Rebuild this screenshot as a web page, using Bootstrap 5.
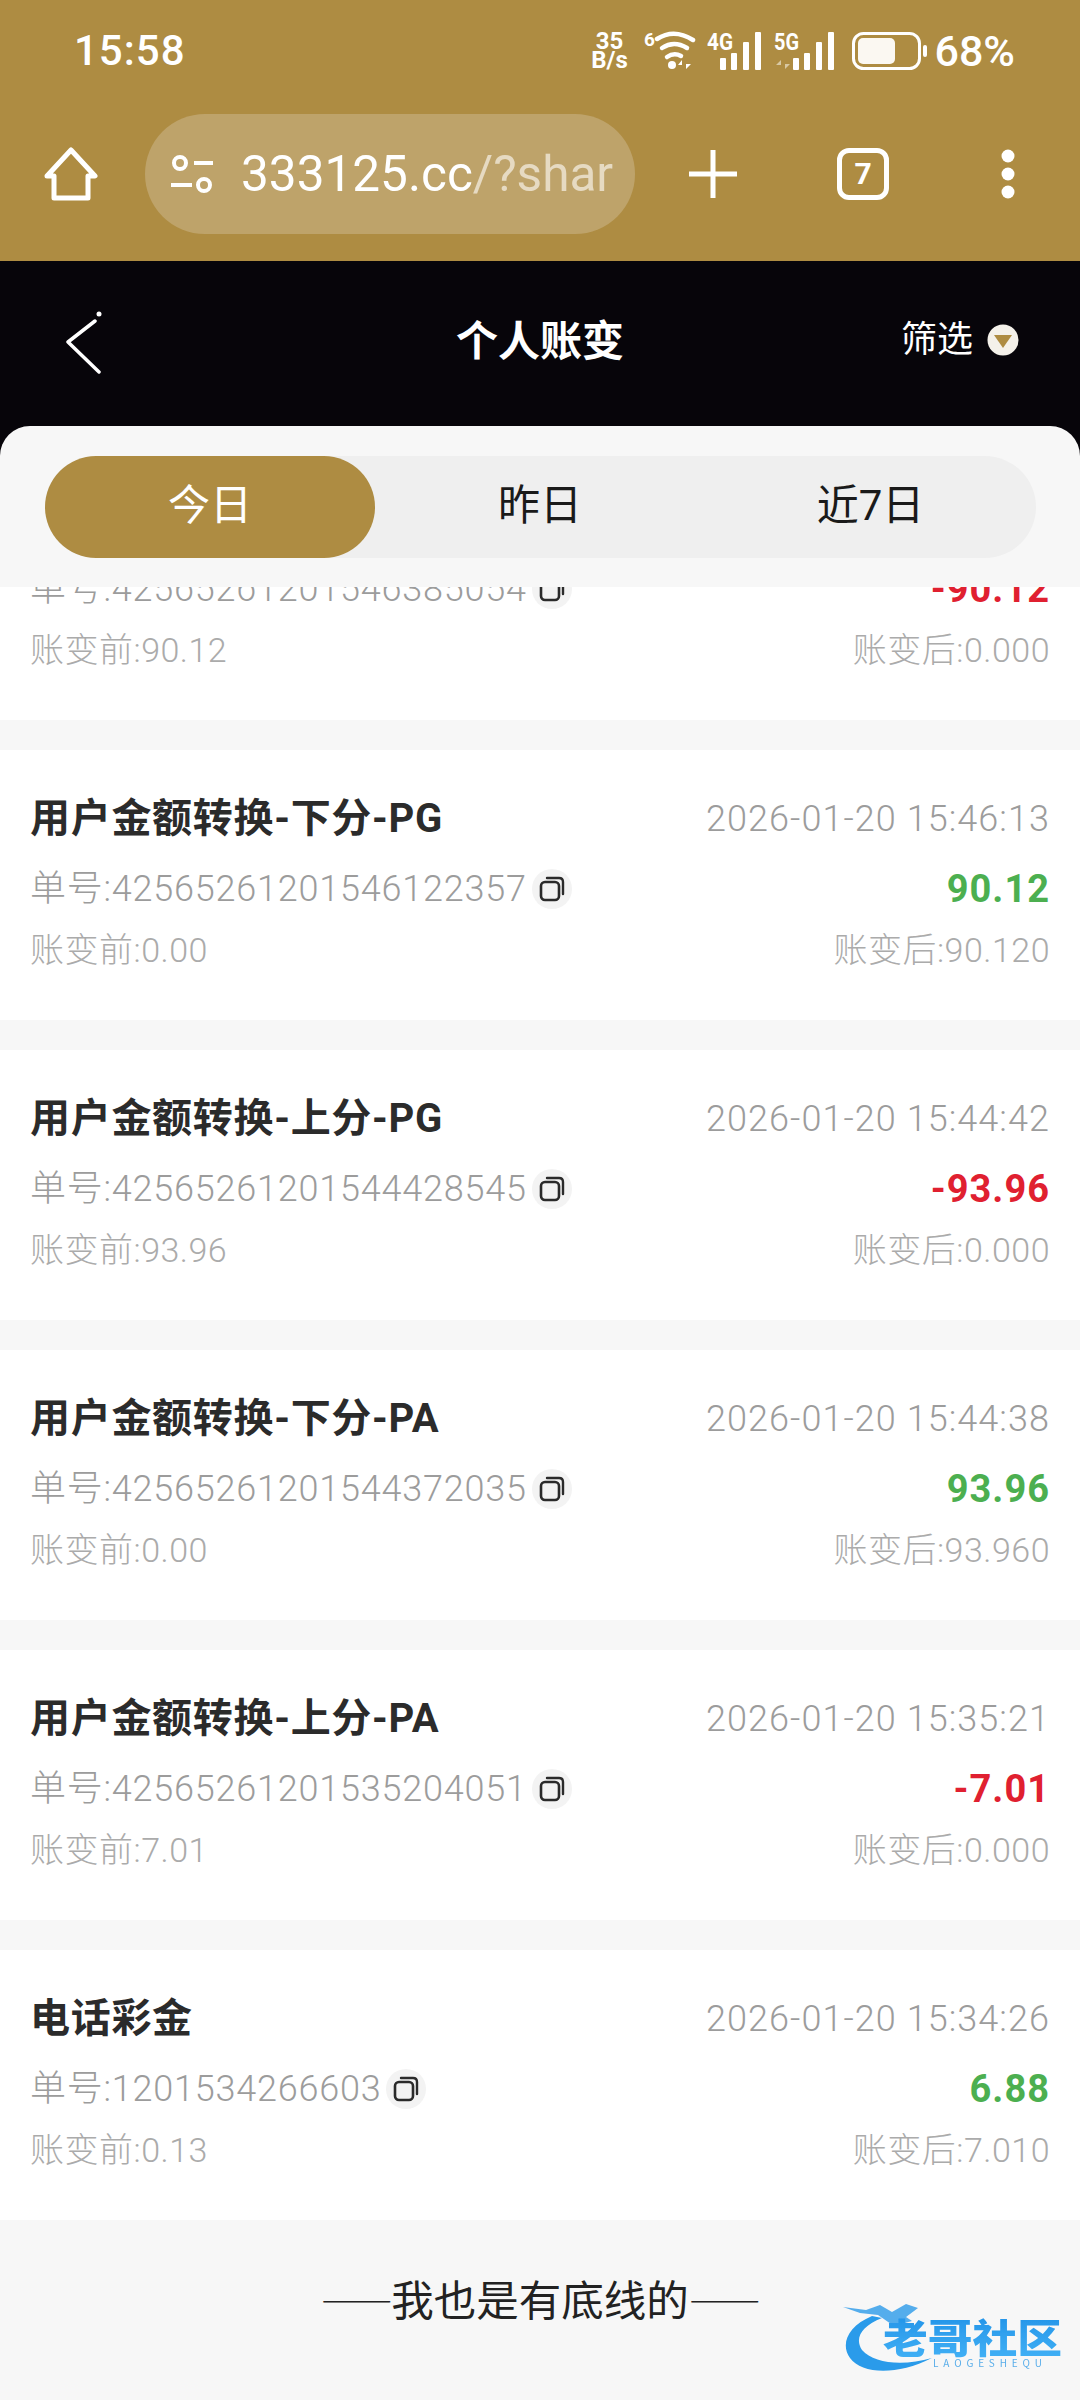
<!DOCTYPE html>
<html lang="zh-CN">
<head>
<meta charset="UTF-8" />
<meta name="viewport" content="width=device-width, initial-scale=1" />
<title>个人账变</title>
<link href="https://cdn.jsdelivr.net/npm/bootstrap@5.3.0/dist/css/bootstrap.min.css" rel="stylesheet">
<style>
  body { margin: 0; width: 1080px; height: 2400px; overflow: hidden; background: #f7f7f7; font-family: Roboto, "Noto Sans CJK SC", sans-serif; }
  .gold-top { height: 261px; background: #ae8c42; color: #fff; }
  .stat-row { height: 82px; padding: 20px 65px 0 74px; }
  .stat-time { font-size: 42px; font-weight: 500; line-height: 42px; letter-spacing: 1px; }
  .stat-speed { width: 42px; font-size: 24px; font-weight: 700; line-height: 19px; text-align: center; margin-right: 14px; }
  .stat-icon { margin-left: 11px; }
  .stat-batt { margin-left: 16px; }
  .stat-pct { font-size: 43px; font-weight: 500; line-height: 42px; margin-left: 6px; }
  .tool-row { height: 120px; margin-top: 32px; padding: 0 44px; }
  .url-pill { width: 490px; height: 120px; margin-left: 47px; border-radius: 60px; background: #bea36a; padding-left: 25px; overflow: hidden; white-space: nowrap; }
  .url-text { font-size: 49.5px; margin-left: 27px; }
  .url-text span { color: #e6dac2; }
  .tool-plus { margin-left: 54px; }
  .tab-count { width: 52px; height: 52px; margin-left: 100px; border: 5px solid #fff; border-radius: 12px; font-size: 30px; font-weight: 700; line-height: 1; }
  .tool-dots { margin-left: 111px; }
  .black-wrap { background: #07050a; }
  .black-head { height: 165px; color: #fff; padding: 0 61px 0 66px; position: relative; }
  .black-back { margin-top: 50px; }
  .black-title { position: absolute; left: 0; right: 0; top: 58px; text-align: center; font-size: 42px; font-weight: 700; line-height: 46px; }
  .filter-box { margin-top: 59px; }
  .filter-text { font-size: 36px; line-height: 40px; margin-right: 14px; }
  .sheet-head { height: 161px; background: #f7f7f7; border-radius: 30px 30px 0 0; padding: 30px 44px 0 45px; }
  .tab-track { height: 102px; border-radius: 51px; background: #efefef; }
  .tab-item { width: 330px; height: 102px; padding-bottom: 4px; border-radius: 51px; font-size: 42px; color: #1a1a1a; }
  .tab-on { background: #ae8c42; color: #fff; }
  .tab-last { width: 331px; }
  .bill-list { height: 1633px; overflow: hidden; }
  .bill-item { height: 270px; background: #fff; margin-bottom: 30px; padding: 51px 30px 0; }
  .bill-clip { margin-top: -137px; }
  .bill-line1 { height: 36px; }
  .bill-line2 { height: 36px; margin-top: 34px; }
  .bill-line3 { height: 36px; margin-top: 25px; }
  .bill-name { font-size: 40px; font-weight: 700; color: #2b2b2b; line-height: 36px; letter-spacing: .7px; }
  .bill-time { font-size: 36px; font-weight: 300; color: #9c9c9c; line-height: 36px; letter-spacing: 1.05px; }
  .bill-no { font-size: 36px; font-weight: 300; color: #9c9c9c; line-height: 36px; letter-spacing: .77px; }
  .bill-amt { font-size: 38px; font-weight: 700; line-height: 36px; letter-spacing: 1px; }
  .amt-up { color: #4caf50; }
  .amt-down { color: #e02030; }
  .bill-sub { font-size: 34px; font-weight: 300; color: #ababab; line-height: 36px; letter-spacing: .5px; }
  .copy-btn { width: 40px; height: 40px; margin-left: 5px; border-radius: 50%; background: #f3f3f3; }
  .foot-wrap { height: 180px; position: relative; padding-top: 57px; text-align: center; font-size: 42.5px; line-height: 46px; color: #222; }
  .foot-dash { font-family: "Noto Sans CJK SC", sans-serif; font-size: 36px; letter-spacing: -1.5px; }
  .foot-logo { position: absolute; left: 840px; top: 70px; }
  .foot-logo text { font-family: "Noto Sans CJK SC", sans-serif; }
</style>
</head>
<body>

  <div class="gold-top">
    <div class="stat-row d-flex align-items-center justify-content-between">
      <div class="stat-time">15:58</div>
      <div class="d-flex align-items-center">
        <div class="stat-speed">35<br>B/s</div>
        <svg width="52" height="40" viewBox="0 0 52 40">
          <text x="0" y="15" font-size="19" font-weight="700" fill="#fff">6</text>
          <g fill="none" stroke="#fff" stroke-width="4.5" stroke-linecap="round">
            <path d="M13 8Q30 -3 49 9"/>
            <path d="M18 17Q30 9 43 17"/>
            <path d="M23 26Q30 21 37 25"/>
          </g>
          <circle cx="28" cy="34" r="4" fill="#fff"/>
          <path d="M38 38V29l-4 5h4zM42 29v9l5-5h-5z" fill="#fff"/>
        </svg>
        <svg class="stat-icon" width="56" height="40" viewBox="0 0 56 40">
          <text x="0" y="19" font-size="23" font-weight="700" fill="#fff" textLength="26" lengthAdjust="spacingAndGlyphs">4G</text>
          <g fill="#fff"><rect x="13" y="27" width="6" height="12" rx="1"/><rect x="24" y="22" width="6" height="17" rx="1"/><rect x="36" y="11" width="6" height="28" rx="1"/><rect x="48" y="1" width="6" height="38" rx="1"/></g>
        </svg>
        <svg class="stat-icon" width="62" height="40" viewBox="0 0 62 40">
          <text x="0" y="19" font-size="23" font-weight="700" fill="#fff" textLength="25" lengthAdjust="spacingAndGlyphs">5G</text>
          <path d="M7 38V29l-5 5h5zM11 29v9l5-5h-5z" fill="#d8c8a2"/>
          <g fill="#fff"><rect x="19" y="27" width="6" height="12" rx="1"/><rect x="30" y="22" width="6" height="17" rx="1"/><rect x="42" y="11" width="6" height="28" rx="1"/><rect x="54" y="1" width="6" height="38" rx="1"/></g>
        </svg>
        <svg class="stat-batt" width="76" height="38" viewBox="0 0 76 38">
          <rect x="1.5" y="1.5" width="66" height="35" rx="10" fill="none" stroke="#fff" stroke-width="3"/>
          <rect x="6" y="6" width="37" height="26" rx="5" fill="#fbf8f2"/>
          <rect x="71" y="13" width="4" height="12" rx="2" fill="#fff"/>
        </svg>
        <div class="stat-pct">68%</div>
      </div>
    </div>
    <div class="tool-row d-flex align-items-center">
      <svg width="54" height="56" viewBox="0 0 54 56" class="flex-shrink-0">
        <path d="M27 4L51 30H44V52H10V30H3Z" fill="none" stroke="#fff" stroke-width="5" stroke-linejoin="round"/>
      </svg>
      <div class="url-pill d-flex align-items-center flex-shrink-0">
        <svg width="44" height="40" viewBox="0 0 44 40" class="flex-shrink-0">
          <g fill="none" stroke="#fff" stroke-width="4">
            <circle cx="10" cy="9" r="6"/><circle cx="34" cy="31" r="6"/>
            <path d="M24 9H43M1 31H22"/>
          </g>
        </svg>
        <div class="url-text">333125.cc<span>/?shar</span></div>
      </div>
      <svg class="tool-plus flex-shrink-0" width="48" height="48" viewBox="0 0 48 48">
        <path d="M24 0V48M0 24H48" stroke="#fff" stroke-width="5" stroke-linecap="round"/>
      </svg>
      <div class="tab-count d-flex align-items-center justify-content-center flex-shrink-0">7</div>
      <svg class="tool-dots flex-shrink-0" width="16" height="50" viewBox="0 0 16 50">
        <circle cx="8" cy="7" r="6.5" fill="#fff"/><circle cx="8" cy="25" r="6.5" fill="#fff"/><circle cx="8" cy="43" r="6.5" fill="#fff"/>
      </svg>
    </div>
  </div>

  <div class="black-wrap">
    <div class="black-head d-flex align-items-start justify-content-between">
      <svg class="black-back" width="38" height="64" viewBox="0 0 38 64">
        <circle cx="33" cy="3" r="2.5" fill="#fff"/>
        <path d="M29 10L2 31L33 61" fill="none" stroke="#fff" stroke-width="3.5" stroke-linecap="round" stroke-linejoin="round"/>
      </svg>
      <div class="black-title">个人账变</div>
      <div class="filter-box d-flex align-items-center">
        <span class="filter-text">筛选</span>
        <svg width="32" height="32" viewBox="0 0 32 32">
          <circle cx="16" cy="16" r="15.5" fill="#f4f1ea"/>
          <path d="M7 11H25L16 24Z" fill="#ae8c42"/>
        </svg>
      </div>
    </div>

    <div class="sheet-head">
      <div class="tab-track d-flex">
        <div class="tab-item tab-on d-flex align-items-center justify-content-center">今日</div>
        <div class="tab-item d-flex align-items-center justify-content-center">昨日</div>
        <div class="tab-item tab-last d-flex align-items-center justify-content-center">近7日</div>
      </div>
    </div>
  </div>

  <div class="bill-list" id="billList"></div>

  <div class="foot-wrap">
    <span class="foot-dash">——</span>我也是有底线的<span class="foot-dash">——</span>
    <svg class="foot-logo" width="240" height="110" viewBox="0 0 240 110">
      <defs>
        <linearGradient id="logoBlue" x1="0" y1="0" x2="0" y2="1">
          <stop offset="0" stop-color="#1e8fe6"/><stop offset="1" stop-color="#45b4f7"/>
        </linearGradient>
        <filter id="logoSoft"><feGaussianBlur stdDeviation="0.7"/></filter>
      </defs>
      <g filter="url(#logoSoft)">
        <path d="M32 26C8 36 0 54 10 68C22 84 56 86 92 68C64 76 34 74 22 60C14 48 22 36 42 28Z" fill="#2a9bea"/>
        <path d="M3 17L26 20L40 15L52 22L66 14L78 18L66 27L72 31L54 36L38 25L20 23Z" fill="#2d9aea" opacity=".8"/>
        <text x="43" y="63" font-size="40" font-weight="900" fill="url(#logoBlue)" textLength="179" lengthAdjust="spacingAndGlyphs">老哥社区</text>
        <text x="93" y="77" font-size="10" fill="#5aaeea" textLength="109">LAOGESHEQU</text>
      </g>
    </svg>
  </div>

  <script src="https://cdn.jsdelivr.net/npm/bootstrap@5.3.0/dist/js/bootstrap.bundle.min.js"></script>
  <script>
    const bills = [
      { name: '用户金额转换-上分-PG', time: '2026-01-20 15:46:17', no: '42565261201546385054', amt: '-90.12', before: '90.12', after: '0.000' },
      { name: '用户金额转换-下分-PG', time: '2026-01-20 15:46:13', no: '42565261201546122357', amt: '90.12', before: '0.00', after: '90.120' },
      { name: '用户金额转换-上分-PG', time: '2026-01-20 15:44:42', no: '42565261201544428545', amt: '-93.96', before: '93.96', after: '0.000' },
      { name: '用户金额转换-下分-PA', time: '2026-01-20 15:44:38', no: '42565261201544372035', amt: '93.96', before: '0.00', after: '93.960' },
      { name: '用户金额转换-上分-PA', time: '2026-01-20 15:35:21', no: '42565261201535204051', amt: '-7.01', before: '7.01', after: '0.000' },
      { name: '电话彩金', time: '2026-01-20 15:34:26', no: '1201534266603', amt: '6.88', before: '0.13', after: '7.010' }
    ];
    const copyIcon = '<span class="copy-btn d-flex align-items-center justify-content-center"><svg width="26" height="26" viewBox="0 0 26 26"><rect x="2" y="6" width="18" height="18" rx="4" fill="none" stroke="#2b2b2b" stroke-width="2.6"/><path d="M8 2H20Q24 2 24 6V18" fill="none" stroke="#2b2b2b" stroke-width="2.4" stroke-linecap="round"/></svg></span>';
    document.getElementById('billList').innerHTML = bills.map((b, i) => `
      <div class="bill-item${i === 0 ? ' bill-clip' : ''}">
        <div class="bill-line1 d-flex justify-content-between align-items-center">
          <span class="bill-name">${b.name}</span><span class="bill-time">${b.time}</span>
        </div>
        <div class="bill-line2 d-flex justify-content-between align-items-center">
          <span class="d-flex align-items-center"><span class="bill-no">单号:${b.no}</span>${copyIcon}</span>
          <span class="bill-amt ${b.amt[0] === '-' ? 'amt-down' : 'amt-up'}">${b.amt}</span>
        </div>
        <div class="bill-line3 d-flex justify-content-between align-items-center">
          <span class="bill-sub">账变前:${b.before}</span><span class="bill-sub">账变后:${b.after}</span>
        </div>
      </div>`).join('');
  </script>
</body>
</html>
